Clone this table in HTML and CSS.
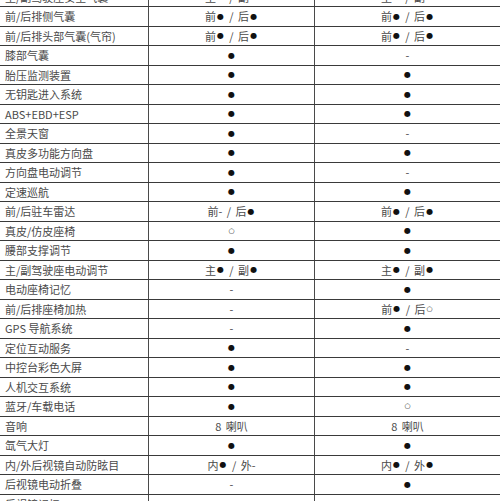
FILE: index.html
```html
<!DOCTYPE html>
<html lang="zh-CN">
<head>
<meta charset="utf-8">
<title>配置表</title>
<link rel="stylesheet" href="styles.css">
</head>
<body>
<div class="spec">
  <div class="row"><div class="name">主/副驾驶座安全气囊</div><div class="val">主<span class="d">●</span> / 副<span class="d">●</span></div><div class="val">主<span class="d">●</span> / 副<span class="d">●</span></div></div>
  <div class="row"><div class="name">前/后排侧气囊</div><div class="val">前<span class="d">●</span> / 后<span class="d">●</span></div><div class="val">前<span class="d">●</span> / 后<span class="d">●</span></div></div>
  <div class="row"><div class="name">前/后排头部气囊(气帘)</div><div class="val">前<span class="d">●</span> / 后<span class="d">●</span></div><div class="val">前<span class="d">●</span> / 后<span class="d">●</span></div></div>
  <div class="row"><div class="name">膝部气囊</div><div class="val"><span class="d">●</span></div><div class="val">-</div></div>
  <div class="row"><div class="name">胎压监测装置</div><div class="val"><span class="d">●</span></div><div class="val"><span class="d">●</span></div></div>
  <div class="row"><div class="name">无钥匙进入系统</div><div class="val"><span class="d">●</span></div><div class="val"><span class="d">●</span></div></div>
  <div class="row"><div class="name">ABS+EBD+ESP</div><div class="val"><span class="d">●</span></div><div class="val"><span class="d">●</span></div></div>
  <div class="row"><div class="name">全景天窗</div><div class="val"><span class="d">●</span></div><div class="val">-</div></div>
  <div class="row"><div class="name">真皮多功能方向盘</div><div class="val"><span class="d">●</span></div><div class="val"><span class="d">●</span></div></div>
  <div class="row"><div class="name">方向盘电动调节</div><div class="val"><span class="d">●</span></div><div class="val">-</div></div>
  <div class="row"><div class="name">定速巡航</div><div class="val"><span class="d">●</span></div><div class="val"><span class="d">●</span></div></div>
  <div class="row"><div class="name">前/后驻车雷达</div><div class="val">前- / 后<span class="d">●</span></div><div class="val">前<span class="d">●</span> / 后<span class="d">●</span></div></div>
  <div class="row"><div class="name">真皮/仿皮座椅</div><div class="val"><span class="o">○</span></div><div class="val"><span class="d">●</span></div></div>
  <div class="row"><div class="name">腰部支撑调节</div><div class="val"><span class="d">●</span></div><div class="val"><span class="d">●</span></div></div>
  <div class="row"><div class="name">主/副驾驶座电动调节</div><div class="val">主<span class="d">●</span> / 副<span class="d">●</span></div><div class="val">主<span class="d">●</span> / 副<span class="d">●</span></div></div>
  <div class="row"><div class="name">电动座椅记忆</div><div class="val">-</div><div class="val"><span class="d">●</span></div></div>
  <div class="row"><div class="name">前/后排座椅加热</div><div class="val">-</div><div class="val">前<span class="d">●</span> / 后<span class="o">○</span></div></div>
  <div class="row"><div class="name">GPS 导航系统</div><div class="val">-</div><div class="val"><span class="d">●</span></div></div>
  <div class="row"><div class="name">定位互动服务</div><div class="val"><span class="d">●</span></div><div class="val">-</div></div>
  <div class="row"><div class="name">中控台彩色大屏</div><div class="val"><span class="d">●</span></div><div class="val"><span class="d">●</span></div></div>
  <div class="row"><div class="name">人机交互系统</div><div class="val"><span class="d">●</span></div><div class="val"><span class="d">●</span></div></div>
  <div class="row"><div class="name">蓝牙/车载电话</div><div class="val"><span class="d">●</span></div><div class="val"><span class="o">○</span></div></div>
  <div class="row"><div class="name">音响</div><div class="val">8 喇叭</div><div class="val">8 喇叭</div></div>
  <div class="row"><div class="name">氙气大灯</div><div class="val"><span class="d">●</span></div><div class="val"><span class="d">●</span></div></div>
  <div class="row"><div class="name">内/外后视镜自动防眩目</div><div class="val">内<span class="d">●</span> / 外-</div><div class="val">内<span class="d">●</span> / 外<span class="d">●</span></div></div>
  <div class="row"><div class="name">后视镜电动折叠</div><div class="val">-</div><div class="val"><span class="d">●</span></div></div>
  <div class="row"><div class="name">后视镜记忆</div><div class="val">-</div><div class="val"><span class="d">●</span></div></div>
</div>
</body>
</html>
```

FILE: styles.css
```css
html, body {
  margin: 0;
  padding: 0;
  background: #fff;
}
body {
  font-family: "Noto Sans CJK SC", "Liberation Sans", sans-serif;
  font-size: 11px;
  color: #4a4a4a;
  overflow: hidden;
}
.spec {
  width: 500px;
  margin-top: -12.2px;
}
.row {
  display: grid;
  grid-template-columns: 149px 166px 1fr;
  height: 19.5px;
  box-sizing: border-box;
  border-bottom: 1px solid #3a3a3a;
}
.row > div {
  display: flex;
  align-items: center;
  white-space: pre;
  line-height: 1;
  overflow: hidden;
}
.name {
  padding-left: 5px;
  border-right: 1px solid #4a4a4a;
}
.val {
  justify-content: center;
  word-spacing: 2px;
}
.val:nth-child(2) {
  border-right: 1px solid #4a4a4a;
}
.d {
  font-family: "DejaVu Sans", sans-serif;
  font-size: 8px;
  color: #111;
  padding: 0 1px;
}
.o {
  font-family: "DejaVu Sans", sans-serif;
  font-size: 7px;
  color: #222;
  padding: 0 1px;
}
```
